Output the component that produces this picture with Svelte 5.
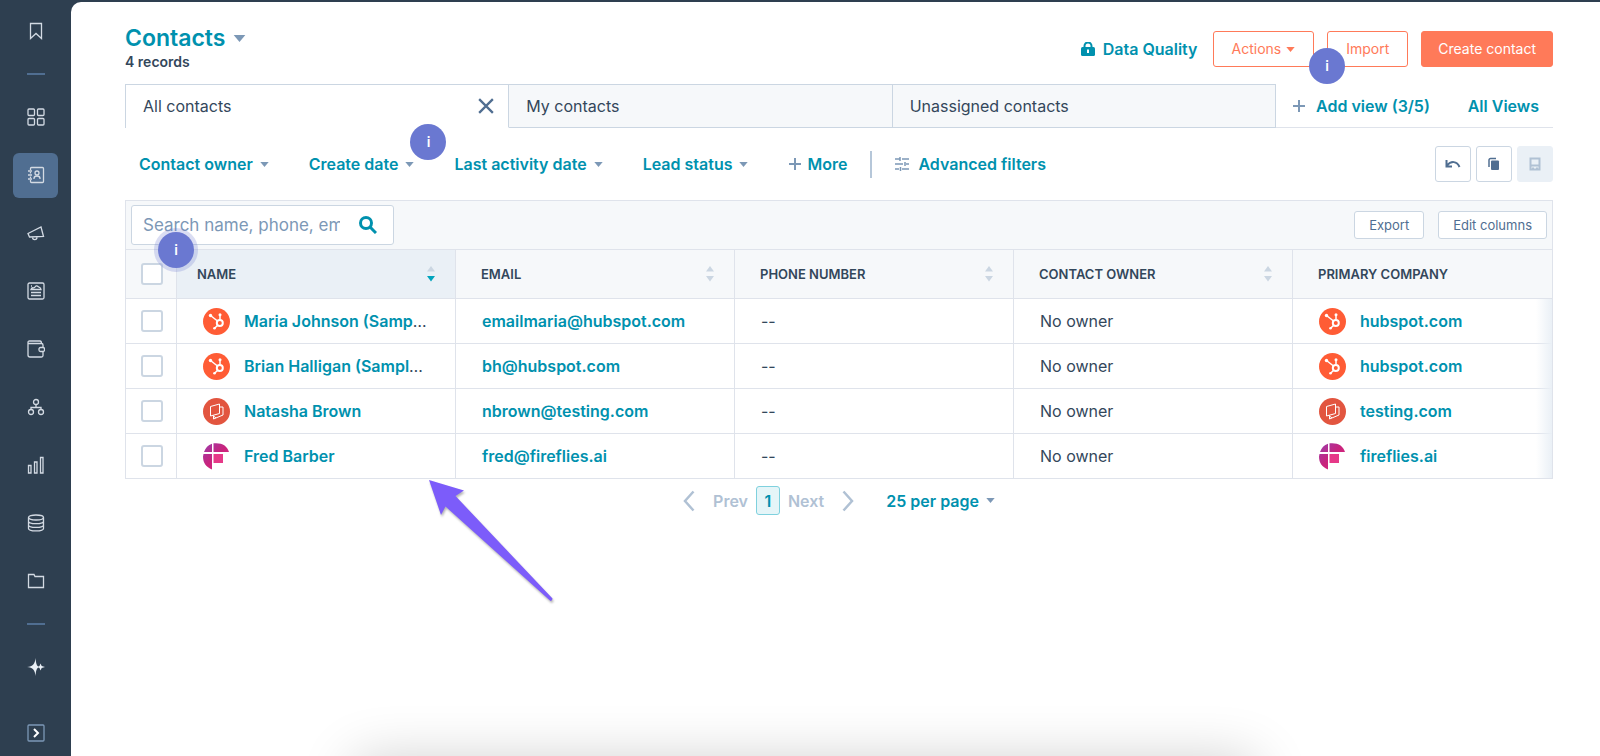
<script lang="ts">
    type Brand = "hubspot" | "testing" | "fireflies";
    type Contact = { name: string; email: string; company: string; brand: Brand };

    const navItems = ["Workspaces", "CRM", "Marketing", "Content", "Commerce", "Automations", "Reporting", "Data management", "Library"];
    const activeItem = "CRM";

    const columns = ["Name", "Email", "Phone number", "Contact owner", "Primary company"];
    const views = ["All contacts", "My contacts", "Unassigned contacts"];
    const filters = ["Contact owner", "Create date", "Last activity date", "Lead status"];

    const contacts: Contact[] = [
        { name: "Maria Johnson (Sample Contact)", email: "emailmaria@hubspot.com", company: "hubspot.com", brand: "hubspot" },
        { name: "Brian Halligan (Sample Contact)", email: "bh@hubspot.com", company: "hubspot.com", brand: "hubspot" },
        { name: "Natasha Brown", email: "nbrown@testing.com", company: "testing.com", brand: "testing" },
        { name: "Fred Barber", email: "fred@fireflies.ai", company: "fireflies.ai", brand: "fireflies" },
    ];

    let activeView = $state("All contacts");
    let search = $state("");
    let selected: boolean[] = $state(contacts.map(() => false));
    let allSelected = $derived(selected.every(Boolean));

    function toggleAll() {
        const next = !allSelected;
        selected = selected.map(() => next);
    }
</script>

{#snippet caret()}
    <svg class="caret" viewBox="0 0 10 6" aria-hidden="true"><path d="M0 0h10L5 6z"/></svg>
{/snippet}

{#snippet plus()}
    <svg class="plus" viewBox="0 0 14 14" aria-hidden="true"><path d="M7 1v12M1 7h12"/></svg>
{/snippet}

{#snippet navIcon(name: string)}
    <svg class="nav-icon" viewBox="0 0 18 18" aria-hidden="true">
        {#if name === "Bookmarks"}
            <path d="M3.500 1.500h11v15L9 11.500l-5.500 5z"/>
        {:else if name === "Workspaces"}
            <rect x="1" y="1" width="6.500" height="6.500" rx="1"/>
            <rect x="10.500" y="1" width="6.500" height="6.500" rx="1"/>
            <rect x="1" y="10.500" width="6.500" height="6.500" rx="1"/>
            <rect x="10.500" y="10.500" width="6.500" height="6.500" rx="1"/>
        {:else if name === "CRM"}
            <path d="M3.500 4V2.500a1 1 0 0 1 1-1h11a1 1 0 0 1 1 1v13a1 1 0 0 1-1 1h-11a1 1 0 0 1-1-1V14M3.500 6v1.500M3.500 10.500V12M1 5h4M1 9h4M1 13h4"/>
            <circle cx="10" cy="7" r="2"/>
            <path d="M7 13v-.500a3 2.500 0 0 1 6 0v.500"/>
        {:else if name === "Marketing"}
            <path d="M1 9.500 14 3l2.500 9.500L2.500 13zM5.500 13c0 3.500 4.500 3.500 4.500 0"/>
        {:else if name === "Content"}
            <rect x="1" y="1" width="16" height="16" rx="1.500"/>
            <path d="M4 7.500c1-3 2.500-1 3.500-2s2-2.500 3.500-1 2.500 0 3 3zM4 4h1M4 10.500h10M4 13.500h10"/>
        {:else if name === "Commerce"}
            <path d="M16 7V5a1.500 1.500 0 0 0-1.500-1.500h-12C.500 3.500.500 1 2.500 1H13c1 0 1.500.500 1.500 2.500M1 2.500V15a2 2 0 0 0 2 2h11.500A1.500 1.500 0 0 0 16 15.500V12"/>
            <rect x="12" y="7.500" width="5.500" height="4" rx="1.500"/>
        {:else if name === "Automations"}
            <circle cx="9" cy="4" r="2.500"/>
            <circle cx="4" cy="14" r="2.500"/>
            <circle cx="14" cy="14" r="2.500"/>
            <path d="M9 6.500V9M4 11.500V9.500h10v2"/>
        {:else if name === "Reporting"}
            <path d="M1.500 9.500H4V17H1.500zM7.500 6H10v11H7.500zM13.500 1.500H16V17h-2.500z"/>
        {:else if name === "Data management"}
            <ellipse cx="9" cy="3.500" rx="7.500" ry="2.500"/>
            <path d="M1.500 3.500v11c0 3.300 15 3.300 15 0v-11M1.500 7.200c0 3.300 15 3.300 15 0M1.500 10.900c0 3.300 15 3.300 15 0"/>
        {:else if name === "Library"}
            <path d="M1.500 2.500h5.500l1 2h8.500v11h-15z"/>
        {:else if name === "Breeze"}
            <path class="solid" d="M8.500 0c.500 6 1.500 8 3 8.500l1-.500 1-2.500 1.200 2.500 3.300 1-3.300 1-1.200 2.500-1-2.500-1-.500c-1.500.500-2.500 2.500-3 8.500C8 12 6 9.500 0 9 6 8.500 8 6 8.500 0z"/>
        {:else}
            <rect class="frame" x="1" y="1" width="16" height="16" rx="1"/>
            <path class="bold" d="m7 5 4 4-4 4"/>
        {/if}
    </svg>
{/snippet}

{#snippet logo(brand: Brand)}
    <svg class="logo" viewBox="0 0 27 27" aria-hidden="true">
        {#if brand === "hubspot"}
            <circle cx="13.500" cy="13.500" r="13.500" fill="#ff5c35"/>
            <g fill="none" stroke="#fff">
                <circle cx="16.800" cy="15" r="3" stroke-width="2"/>
                <path d="M7.500 7.500 14.500 13M17 11.500V7M14.500 17.500l-3 2.800" stroke-width="1.500"/>
            </g>
            <g fill="#fff">
                <circle cx="7.500" cy="7.500" r="1.700"/>
                <circle cx="17" cy="6.800" r="1.500"/>
                <circle cx="11.500" cy="20.300" r="1.300"/>
            </g>
        {:else if brand === "testing"}
            <circle cx="13.500" cy="13.500" r="13.500" fill="#e2553f"/>
            <path d="M7.500 8.500 16.500 6v9.500L7.500 18zM16.500 9h3.500v8l-9.500 4V17.500M10.500 18l2.500 2" fill="none" stroke="#fff" stroke-linejoin="round"/>
        {:else}
            <defs>
                <linearGradient id="firefly" x1="0" y1="0" x2="1" y2="1">
                    <stop offset="0" stop-color="#9b3cac"/>
                    <stop offset=".5" stop-color="#c9237c"/>
                    <stop offset="1" stop-color="#e02c83"/>
                </linearGradient>
            </defs>
            <path d="M9 9H1C2.500 5 5 2 9 .800zM10.500 9V.300c8-1 14 2.500 15.500 8.700zM9 11v15.500C3 24 0 20 0 13.500L.500 11z" fill="url(#firefly)"/>
            <path d="M10.500 11H20v9h-9.500z" fill="#e63988"/>
        {/if}
    </svg>
{/snippet}

<div class="app">
    <nav class="sidebar" aria-label="Main">
        <button class="nav-item" aria-label="Bookmarks">{@render navIcon("Bookmarks")}</button>
        <hr/>
        {#each navItems as item}
            <button class="nav-item" aria-label={item}>
                <span class="nav-tile" class:active={item === activeItem}>{@render navIcon(item)}</span>
            </button>
        {/each}
        <hr/>
        <button class="nav-item" aria-label="Breeze">{@render navIcon("Breeze")}</button>
        <button class="nav-item expand" aria-label="Expand menu">{@render navIcon("Expand")}</button>
    </nav>

    <main>
        <header>
            <div class="heading">
                <h1><button class="title">Contacts {@render caret()}</button></h1>
                <p>4 records</p>
            </div>
            <a class="quality" href="#quality">
                <svg viewBox="0 0 14 14" aria-hidden="true">
                    <path d="M3.500 6V4a3.500 3.500 0 0 1 7 0v2" fill="none" stroke="currentColor" stroke-width="2"/>
                    <rect y="5" width="14" height="9" rx="1.500" fill="currentColor"/>
                    <path d="M7 7.500V11" stroke="#fff" stroke-width="2"/>
                </svg>
                Data Quality
            </a>
            <div class="actions">
                <button class="btn">Actions {@render caret()}</button>
                <div class="anchor">
                    <button class="btn">Import</button>
                    <span class="hint hint-import">i</span>
                </div>
                <button class="btn primary">Create contact</button>
            </div>
        </header>

        <div class="views">
            <div class="tabs">
                {#each views as view}
                    <div class="tab" class:active={view === activeView}>
                        <button class="tab-label" onclick={() => (activeView = view)}>{view}</button>
                        {#if view === activeView}
                            <button class="close" aria-label="Close view">
                                <svg viewBox="0 0 14 14" aria-hidden="true"><path d="m1 1 12 12M13 1 1 13"/></svg>
                            </button>
                        {/if}
                    </div>
                {/each}
            </div>
            <div class="view-links">
                <button class="link add">{@render plus()} Add view (3/5)</button>
                <a class="link" href="#views">All Views</a>
            </div>
        </div>

        <div class="filters">
            {#each filters as filter}
                <div class="anchor">
                    <button class="link" aria-haspopup="menu">{filter} {@render caret()}</button>
                    {#if filter === "Create date"}
                        <span class="hint hint-date">i</span>
                    {/if}
                </div>
            {/each}
            <button class="link more">{@render plus()} More</button>
            <span class="divider"></span>
            <button class="link advanced">
                <svg viewBox="0 0 14 14" aria-hidden="true">
                    <path d="M0 2h5M7 2h7M0 7h8M11 7h3M0 12h4M7 12h7M5 0v4M10 5v4M5.500 10v4"/>
                </svg>
                Advanced filters
            </button>
            <div class="tools">
                <button aria-label="Undo">
                    <svg viewBox="0 0 16 16" aria-hidden="true">
                        <path d="M2 9.500C6 4.500 12 5 14.500 11M1.500 4v6.500H7" fill="none" stroke="currentColor" stroke-width="2"/>
                    </svg>
                </button>
                <button aria-label="Duplicate view">
                    <svg viewBox="0 0 16 16" aria-hidden="true">
                        <path d="M3 11V4a1.500 1.500 0 0 1 1.500-1.500H10" fill="none" stroke="currentColor" stroke-width="1.500"/>
                        <rect x="5" y="4.500" width="8" height="9.500" rx="1" fill="currentColor"/>
                    </svg>
                </button>
                <button aria-label="Save view" disabled>
                    <svg viewBox="0 0 16 16" aria-hidden="true">
                        <path d="M3.500 2.500h9v11h-9zM3.500 9.500h9M6 11.500v2M10 11.500v2" fill="none" stroke="currentColor" stroke-width="2"/>
                    </svg>
                </button>
            </div>
        </div>

        <section class="grid">
            <div class="toolbar">
                <label class="search">
                    <input type="text" aria-label="Search contacts" placeholder="Search name, phone, email" bind:value={search}/>
                    <svg viewBox="0 0 18 18" aria-hidden="true"><circle cx="7" cy="7" r="5.500"/><path d="m11 11 6 6"/></svg>
                </label>
                <span class="hint hint-search">i</span>
                <button class="btn small">Export</button>
                <button class="btn small">Edit columns</button>
            </div>
            <div class="table-wrap">
                <table>
                    <colgroup>
                        <col class="col-check"/>
                        <col class="col-data"/>
                        <col class="col-data"/>
                        <col class="col-data"/>
                        <col class="col-data"/>
                        <col/>
                    </colgroup>
                    <thead>
                        <tr>
                            <th class="check"><input type="checkbox" aria-label="Select all" checked={allSelected} onchange={toggleAll}/></th>
                            {#each columns as column, i}
                                <th class:sorted={i === 0}>
                                    <div class="th">
                                        {column}
                                        {#if i < columns.length - 1}
                                            <svg viewBox="0 0 10 16" aria-hidden="true"><path d="M1 5.500 5 0l4 5.500z"/><path class="down" d="M1 10h8l-4 5.500z"/></svg>
                                        {/if}
                                    </div>
                                </th>
                            {/each}
                        </tr>
                    </thead>
                    <tbody>
                        {#each contacts as contact, i}
                            <tr>
                                <td class="check"><input type="checkbox" aria-label={`Select ${contact.name}`} bind:checked={selected[i]}/></td>
                                <td>
                                    <div class="record">
                                        {@render logo(contact.brand)}
                                        <span class="truncate"><a href="#contact">{contact.name}</a></span>
                                    </div>
                                </td>
                                <td><a href={`mailto:${contact.email}`}>{contact.email}</a></td>
                                <td>--</td>
                                <td>No owner</td>
                                <td>
                                    <div class="record">
                                        {@render logo(contact.brand)}
                                        <a href="#company">{contact.company}</a>
                                    </div>
                                </td>
                            </tr>
                        {/each}
                    </tbody>
                </table>
                <div class="fade"></div>
                <svg class="pointer" viewBox="0 0 128 124" aria-hidden="true">
                    <path d="M1 1 36 11.500 27.500 17 124.500 119.500q0 2-2 2.500L17.500 27.500 13 36z"/>
                </svg>
            </div>
        </section>

        <div class="pagination">
            <button class="step" disabled>
                <svg viewBox="0 0 12 22" aria-hidden="true"><path d="M10.500 1.500 2 11l8.500 9.500"/></svg>
                Prev
            </button>
            <button class="page" aria-current="page">1</button>
            <button class="step" disabled>
                Next
                <svg viewBox="0 0 12 22" aria-hidden="true"><path d="M1.500 1.500 10 11l-8.500 9.500"/></svg>
            </button>
            <label class="per-page">
                <select aria-label="Records per page">
                    <option>25 per page</option>
                    <option>50 per page</option>
                    <option>100 per page</option>
                </select>
                {@render caret()}
            </label>
        </div>

        <div class="dock-shadow"></div>
    </main>
</div>

<style>
    :global(body) {
        background: #2e3f50;
        color: #33475b;
        font-family: Inter, "Open Sans", sans-serif;
        font-size: 16px;
        line-height: 20px;
    }

    .app {
        --teal: #0091ae;
        --orange: #ff7a59;
        --slate: #7c98b6;
        --steel: #506e91;
        --border: #cbd6e2;
        --line: #dfe3eb;
        --panel: #f6f8fa;
        display: flex;
        min-height: 100vh;
    }

    .app * {
        box-sizing: border-box;
    }

    button,
    input,
    select {
        margin: 0;
        padding: 0;
        border: 0;
        background: none;
        color: inherit;
        font: inherit;
    }

    button {
        cursor: pointer;
    }

    a {
        color: var(--teal);
        font-weight: 600;
        text-decoration: none;
    }

    svg {
        flex: none;
    }

    /* Sidebar */
    .sidebar {
        display: flex;
        flex-direction: column;
        align-items: center;
        flex: none;
        width: 71px;
        padding-top: 2px;

        & hr {
            width: 18px;
            height: 2px;
            margin: 13px 0;
            border: 0;
            background: var(--steel);
        }
    }

    .nav-item {
        display: grid;
        place-items: center;
        width: 100%;
        height: 58px;

        &.expand {
            height: 46px;
            margin-top: auto;
        }
    }

    .nav-tile {
        display: grid;
        place-items: center;
        width: 45px;
        height: 45px;
        border-radius: 6px;

        &.active {
            background: var(--steel);
        }
    }

    .nav-icon {
        width: 18px;
        height: 18px;
        fill: none;
        stroke: #d3dae3;
        stroke-width: 1.3;

        & .solid {
            fill: #eaf0f6;
            stroke: none;
        }

        & .frame {
            stroke: var(--slate);
        }

        & .bold {
            stroke: #fff;
            stroke-width: 2;
        }
    }

    /* Page */
    main {
        position: relative;
        flex: 1;
        min-width: 0;
        margin-top: 2px;
        padding: 23px 47px 0 54px;
        overflow: hidden;
        border-top-left-radius: 10px;
        background: #fff;
    }

    header {
        display: flex;
        align-items: center;
        padding-bottom: 11px;
    }

    .heading {
        margin-right: auto;

        & h1 {
            margin: 0;
            font-size: 23px;
            line-height: 26px;
        }

        & p {
            margin: 0;
            font-size: 14px;
            line-height: 22px;
            font-weight: 600;
        }
    }

    .title {
        display: flex;
        align-items: center;
        gap: 8px;
        color: var(--teal);
        font-weight: 600;

        & .caret {
            width: 13px;
            height: 7px;
        }
    }

    .caret {
        width: 9px;
        height: 5px;
        fill: var(--slate);
    }

    .plus {
        width: 14px;
        height: 14px;
        fill: none;
        stroke: var(--slate);
        stroke-width: 2;
    }

    .quality {
        display: flex;
        align-items: center;
        gap: 8px;
        margin-right: 15px;

        & svg {
            width: 14px;
            height: 14px;
        }
    }

    .actions {
        display: flex;
        gap: 13px;
    }

    .btn {
        display: flex;
        align-items: center;
        gap: 5px;
        height: 36px;
        padding: 0 18px;
        border: 1px solid var(--orange);
        border-radius: 3px;
        background: #fff;
        color: var(--orange);
        font-size: 14px;
        white-space: nowrap;

        & .caret {
            fill: var(--orange);
        }

        &.primary {
            padding: 0 16px;
            background: var(--orange);
            color: #fff;
        }

        &.small {
            height: 28px;
            padding: 0 14px;
            border-color: var(--border);
            color: var(--steel);
            font-size: 13px;
        }
    }

    .anchor {
        position: relative;
    }

    .hint {
        position: absolute;
        z-index: 2;
        display: grid;
        place-items: center;
        width: 36px;
        height: 36px;
        border-radius: 50%;
        background: #6a78d1;
        color: #fff;
        font-size: 14px;
        font-weight: 600;
    }

    .hint-import {
        top: 17px;
        left: -18px;
    }

    .hint-date {
        top: -30px;
        right: -32px;
    }

    .hint-search {
        top: 31px;
        left: 32px;
        box-shadow: 0 0 0 4px rgba(106, 120, 209, 0.25);
    }

    /* Views */
    .views {
        display: flex;
        height: 44px;
    }

    .tabs {
        display: flex;
        flex: 1;
        border-left: 1px solid var(--border);
    }

    .tab {
        display: flex;
        flex: 1;
        align-items: center;
        padding: 0 14px 0 17px;
        border: 1px solid var(--border);
        border-left: 0;
        background: var(--panel);

        &.active {
            border-bottom-color: #fff;
            background: #fff;
        }
    }

    .tab-label {
        flex: 1;
        text-align: left;
    }

    .close svg {
        display: block;
        width: 16px;
        height: 16px;
        fill: none;
        stroke: var(--steel);
        stroke-width: 2;
    }

    .view-links {
        display: flex;
        align-items: center;
        justify-content: space-between;
        width: 277px;
        padding: 0 14px 0 16px;
        border-bottom: 1px solid var(--line);
    }

    .link {
        display: flex;
        align-items: center;
        gap: 7px;
        color: var(--teal);
        font-weight: 600;
        white-space: nowrap;

        &.add {
            gap: 10px;
        }
    }

    /* Filters */
    .filters {
        display: flex;
        align-items: center;
        gap: 40px;
        height: 72px;
        padding-left: 14px;
    }

    .divider {
        width: 2px;
        height: 27px;
        margin: 0 -17px;
        background: #b6c7d9;
    }

    .more {
        gap: 5px;
    }

    .advanced {
        gap: 9px;

        & svg {
            width: 14px;
            height: 14px;
            fill: none;
            stroke: var(--slate);
            stroke-width: 1.5;
        }
    }

    .tools {
        display: flex;
        gap: 5px;
        margin-left: auto;

        & button {
            display: grid;
            place-items: center;
            width: 36px;
            height: 36px;
            border: 1px solid var(--border);
            border-radius: 3px;
            color: var(--steel);

            &:disabled {
                border-color: #eaf0f6;
                background: #eaf0f6;
                color: #b0c1d4;
            }
        }

        & svg {
            width: 16px;
            height: 16px;
        }
    }

    /* Table */
    .grid {
        border: 1px solid var(--line);
        background: var(--panel);
    }

    .toolbar {
        position: relative;
        display: flex;
        align-items: center;
        gap: 14px;
        height: 48px;
        padding: 0 5px;
    }

    .search {
        display: flex;
        align-items: center;
        justify-content: space-between;
        width: 263px;
        height: 40px;
        margin-right: auto;
        padding: 0 16px 0 11px;
        border: 1px solid var(--border);
        border-radius: 3px;
        background: #fff;

        & input {
            width: 197px;
            font-size: 17px;
            outline: 0;

            &::placeholder {
                color: var(--slate);
                opacity: 1;
            }
        }

        & svg {
            width: 18px;
            height: 18px;
            fill: none;
            stroke: var(--teal);
            stroke-width: 3;
        }
    }

    .table-wrap {
        position: relative;
    }

    table {
        width: 100%;
        table-layout: fixed;
        border-collapse: separate;
        border-spacing: 0;
    }

    .col-check {
        width: 51px;
    }

    .col-data {
        width: 279px;
    }

    th,
    td {
        padding: 0 26px;
        border-top: 1px solid var(--line);
        border-right: 1px solid var(--line);
        text-align: left;
        white-space: nowrap;

        &:last-child {
            border-right: 0;
        }

        &.check {
            padding: 0 12px 0 15px;
        }
    }

    th {
        height: 49px;
        padding-left: 25px;
        font-size: 13px;
        font-weight: 600;
        text-transform: uppercase;

        &.sorted {
            padding-left: 20px;
            background: #eaf0f6;
        }

        &.sorted .down {
            fill: #00a4bd;
        }
    }

    .th {
        display: flex;
        align-items: center;
        justify-content: space-between;

        & svg {
            width: 10px;
            height: 16px;
            margin-right: -7px;
            fill: var(--border);
        }
    }

    td {
        height: 45px;
        background: #fff;
    }

    input[type="checkbox"] {
        appearance: none;
        display: block;
        width: 22px;
        height: 22px;
        border: 2px solid var(--border);
        border-radius: 3px;
        background: #fff;

        &:checked {
            border-color: var(--teal);
            background: var(--teal);
        }
    }

    .record {
        display: flex;
        align-items: center;
        gap: 14px;
    }

    .logo {
        width: 27px;
        height: 27px;
    }

    .truncate {
        overflow: hidden;
        text-overflow: ellipsis;
    }

    .fade {
        position: absolute;
        top: 50px;
        right: 0;
        bottom: 0;
        width: 16px;
        background: linear-gradient(to right, transparent, #eaf0f6);
        pointer-events: none;
    }

    .pointer {
        position: absolute;
        top: calc(100% + 1px);
        left: 302px;
        width: 128px;
        height: 124px;
        fill: #7c5cfa;
        filter: drop-shadow(1px 2px 1px rgba(0, 0, 0, 0.3));
        pointer-events: none;
    }

    /* Pagination */
    .pagination {
        display: flex;
        align-items: center;
        justify-content: center;
        gap: 8px;
        padding-top: 7px;
    }

    .step {
        display: flex;
        align-items: center;
        gap: 18px;
        color: #b0c1d4;
        font-weight: 600;

        & svg {
            width: 12px;
            height: 22px;
            fill: none;
            stroke: currentColor;
            stroke-width: 2.5;
        }
    }

    .page {
        width: 24px;
        height: 29px;
        border: 1px solid #7fd1de;
        border-radius: 3px;
        background: #e5f5f8;
        color: var(--teal);
        font-weight: 600;
    }

    .per-page {
        display: flex;
        align-items: center;
        gap: 7px;
        margin-left: 24px;
        color: var(--teal);
        font-weight: 600;

        & select {
            appearance: none;
            field-sizing: content;
        }
    }

    .dock-shadow {
        position: absolute;
        top: 100%;
        right: 345px;
        left: 284px;
        height: 60px;
        box-shadow: 0 4px 56px rgba(0, 0, 0, 0.2);
        pointer-events: none;
    }
</style>
